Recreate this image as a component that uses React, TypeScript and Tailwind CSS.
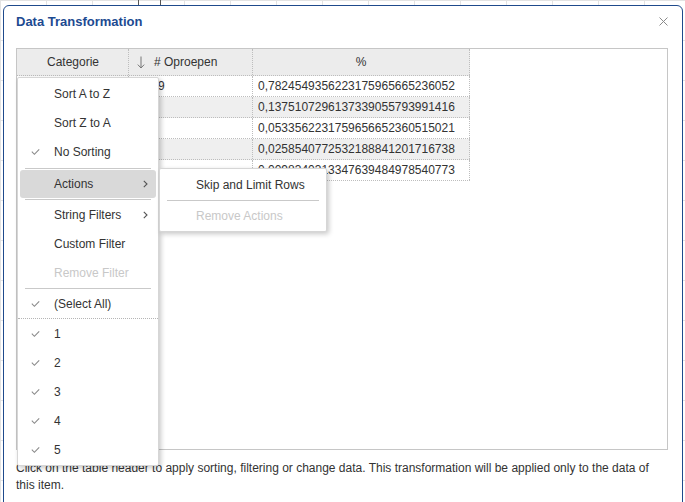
import React from 'react';

const font = { fontFamily: '"Liberation Sans", Arial, sans-serif' };

const rows = [
  { n: '1459', p: '0,7824549356223175965665236052' },
  { n: '', p: '0,1375107296137339055793991416' },
  { n: '', p: '0,0533562231759656652360515021' },
  { n: '', p: '0,0258540772532188841201716738' },
  { n: '', p: '0,0098340313347639484978540773' },
];

function Check() {
  return (
    <svg width="9" height="7" viewBox="0 0 9 7" className="shrink-0">
      <polyline points="0.8,3.2 3.4,5.8 8.2,0.8" fill="none" stroke="#8a8a8a" strokeWidth="1.1" />
    </svg>
  );
}

function Chevron() {
  return (
    <svg width="5" height="8" viewBox="0 0 5 8">
      <polyline points="0.8,0.8 4,4 0.8,7.2" fill="none" stroke="#555" strokeWidth="1.1" />
    </svg>
  );
}

function MenuItem({
  label,
  checked,
  disabled,
  sub,
  active,
}: {
  label: string;
  checked?: boolean;
  disabled?: boolean;
  sub?: boolean;
  active?: boolean;
}) {
  return (
    <div
      className={
        active
          ? 'mx-[2px] flex h-[28px] items-center rounded-[3px] bg-[#d9d9d9] pl-[34px] pr-[8px]'
          : 'flex h-[29px] items-center pl-[36px] pr-[10px]'
      }
    >
      <div className="relative flex flex-1 items-center">
        {checked && (
          <span className="absolute left-[-23px] top-1/2 flex -translate-y-1/2">
            <Check />
          </span>
        )}
        <span className={disabled ? 'flex-1 text-[#c8c8c8]' : 'flex-1 text-[#333]'}>{label}</span>
        {sub && <Chevron />}
      </div>
    </div>
  );
}

function Sep({ h = 'h-[4px]' }: { h?: string }) {
  return (
    <div className={`${h} flex items-center px-[7px]`}>
      <div className="h-px w-full bg-[#c9c9c9]" />
    </div>
  );
}

export default function App() {
  return (
    <div
      className="relative h-[502px] w-[685px] overflow-hidden bg-white bg-[linear-gradient(#e3e3e3_1px,transparent_1px),linear-gradient(90deg,#e3e3e3_1px,transparent_1px)] bg-[size:46px_40px] text-[12px]"
      style={font}
    >
      {/* selected cell behind the dialog */}
      <div className="absolute left-[138px] top-[-4px] h-[10px] w-[23px] border border-[#555]" />

      <div className="absolute left-[3px] top-[5px] h-[520px] w-[680px] rounded-t-[6px] border border-[#1f4a8c] bg-white">
        <div className="flex h-[31px] items-center justify-between pl-[12px] pr-[14px]">
          <span className="text-[13px] font-bold text-[#1d4a91]">Data Transformation</span>
          <svg width="9" height="9" viewBox="0 0 9 9">
            <path d="M0.5 0.5 L8.5 8.5 M8.5 0.5 L0.5 8.5" stroke="#8a8a8a" strokeWidth="1" />
          </svg>
        </div>

        <div className="relative ml-[12px] mt-[11px] h-[402px] w-[652px] border border-[#c6c6c6]">
          {/* table */}
          <div className="w-[453px] text-[#333]">
            <div className="flex h-[27px] border-b border-dotted border-[#bdbdbd] bg-[#ececec]">
              <div className="flex w-[112px] items-center border-r border-dotted border-[#bdbdbd] pl-[30px]">
                Categorie
              </div>
              <div className="flex w-[124px] items-center border-r border-dotted border-[#bdbdbd] pl-[8px]">
                <svg width="8" height="13" viewBox="0 0 8 13" className="mr-[9px]">
                  <path d="M4 0.5 V12 M0.8 8.6 L4 12 L7.2 8.6" fill="none" stroke="#777" strokeWidth="1" />
                </svg>
                # Oproepen
              </div>
              <div className="flex w-[217px] items-center justify-center border-r border-dotted border-[#bdbdbd]">
                %
              </div>
            </div>
            {rows.map((r, i) => (
              <div
                key={i}
                className={`flex h-[21px] border-b border-dotted border-[#bdbdbd] ${i % 2 === 1 ? 'bg-[#efefef]' : 'bg-white'}`}
              >
                <div className="w-[112px] border-r border-dotted border-[#bdbdbd]" />
                <div className="flex w-[124px] items-center border-r border-dotted border-[#bdbdbd] pl-[119px]">
                  <span className="ml-[-110px]">{r.n}</span>
                </div>
                <div className="flex w-[217px] items-center border-r border-dotted border-[#bdbdbd] pl-[5px]">
                  {r.p}
                </div>
              </div>
            ))}
          </div>

          {/* column menu */}
          <div className="absolute left-0 top-[28px] w-[142px] rounded-[2px] border border-[#d6d6d6] bg-white pb-[1px] pt-[1px] shadow-[2px_2px_5px_rgba(0,0,0,0.22)]">
            <MenuItem label="Sort A to Z" />
            <MenuItem label="Sort Z to A" />
            <MenuItem label="No Sorting" checked />
            <Sep />
            <MenuItem label="Actions" sub active />
            <Sep h="h-[2px]" />
            <MenuItem label="String Filters" sub />
            <MenuItem label="Custom Filter" />
            <MenuItem label="Remove Filter" disabled />
            <Sep h="h-[2px]" />
            <MenuItem label="(Select All)" checked />
            <div className="border-t border-dotted border-[#b5b5b5]" />
            {['1', '2', '3', '4', '5'].map((v) => (
              <MenuItem key={v} label={v} checked />
            ))}
          </div>

          {/* actions submenu */}
          <div className="absolute left-[142px] top-[119px] w-[168px] rounded-[2px] border border-[#d6d6d6] bg-white pb-[1px] pt-[2px] shadow-[2px_2px_5px_rgba(0,0,0,0.22)]">
            <div className="flex h-[28px] items-center pl-[36px] text-[#333]">Skip and Limit Rows</div>
            <Sep h="h-[3px]" />
            <div className="flex h-[28px] items-center pl-[36px] text-[#c8c8c8]">Remove Actions</div>
          </div>
        </div>

        <p className="mx-[12px] mt-[10px] text-[12px] leading-[17px] text-[#333]">
          Click on the table header to apply sorting, filtering or change data. This transformation will be applied only to the data of
          this item.
        </p>
      </div>
    </div>
  );
}
